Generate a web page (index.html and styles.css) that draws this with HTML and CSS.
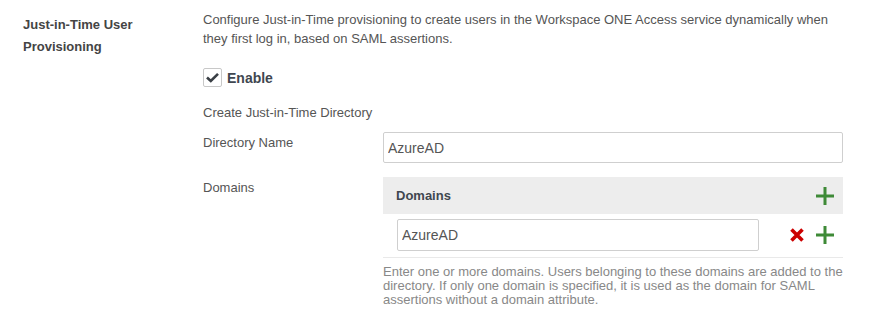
FILE: index.html
```html
<!DOCTYPE html>
<html lang="en">
<head>
  <meta charset="UTF-8">
  <title>Just-in-Time User Provisioning</title>
  <link rel="stylesheet" href="styles.css">
</head>
<body>
  <div class="section">
    <div class="section-title">Just-in-Time User Provisioning</div>

    <div class="section-body">
      <p class="intro">
        Configure Just-in-Time provisioning to create users in the Workspace ONE Access service dynamically when
        they first log in, based on SAML assertions.
      </p>

      <!-- enable checkbox -->
      <label class="enable">
        <span class="checkbox">
          <svg width="13" height="11" viewBox="0 0 13 11"><path d="M1 5.5 L4.8 9 L12 1.8" fill="none" stroke="#3a3f45" stroke-width="2.6"/></svg>
        </span>
        Enable
      </label>

      <div class="subhead">Create Just-in-Time Directory</div>

      <div class="field">
        <div class="field-label">Directory Name</div>
        <div class="field-control">
          <input class="text-input" type="text" value="AzureAD">
        </div>
      </div>

      <div class="field">
        <div class="field-label">Domains</div>
        <div class="field-control">
          <div class="domains-head">
            <span>Domains</span>
            <span class="icon-add">
              <svg width="18" height="18" viewBox="0 0 18 18"><path d="M9 0 V18 M0 9 H18" stroke="#3e8a37" stroke-width="3"/></svg>
            </span>
          </div>
          <div class="domain-row">
            <input class="text-input domain-input" type="text" value="AzureAD">
            <span class="icon-remove">
              <svg width="14" height="14" viewBox="0 0 14 14"><path d="M1.5 1.5 L12.5 12.5 M12.5 1.5 L1.5 12.5" stroke="#cc0000" stroke-width="3.6"/></svg>
            </span>
            <span class="icon-add">
              <svg width="18" height="18" viewBox="0 0 18 18"><path d="M9 0 V18 M0 9 H18" stroke="#3e8a37" stroke-width="3"/></svg>
            </span>
          </div>
          <p class="help">
            Enter one or more domains. Users belonging to these domains are added to the
            directory. If only one domain is specified, it is used as the domain for SAML
            assertions without a domain attribute.
          </p>
        </div>
      </div>
    </div>
  </div>
</body>
</html>
```

FILE: styles.css
```css
/* page */
body {
  margin: 0;
  background-color: #fff;
  font-family: "Liberation Sans", Arial, sans-serif;
  font-size: 13px;
  color: #555;
}
.section {
  display: flex;
  padding: 10px 0 0 23px;
}
/* left title */
.section-title {
  width: 125px;
  margin-right: 55px;
  padding-top: 4px;
  font-weight: bold;
  line-height: 22px;
  color: #444;
}
.section-body {
  width: 640px;
}
.intro {
  margin: 0;
  line-height: 19px;
  color: #555;
}
/* enable checkbox */
.enable {
  display: flex;
  align-items: center;
  margin-top: 20px;
  font-size: 14px;
  font-weight: bold;
  color: #3f4750;
}
.checkbox {
  box-sizing: border-box;
  width: 19px;
  height: 19px;
  margin-right: 5px;
  border: 1px solid #c8c8c8;
  border-radius: 2px;
  display: flex;
  align-items: center;
  justify-content: center;
}
.subhead {
  margin-top: 17px;
  line-height: 18px;
  color: #555;
}
/* label + control rows */
.field {
  display: flex;
  margin-top: 10px;
}
.field + .field {
  margin-top: 14px;
}
.field-label {
  width: 180px;
  padding-top: 2px;
  line-height: 18px;
  color: #555;
}
.field-control {
  width: 460px;
}
.text-input {
  box-sizing: border-box;
  width: 100%;
  height: 31px;
  margin: 0;
  padding: 0 4px;
  border: 1px solid #cfcfcf;
  border-radius: 2px;
  font-family: inherit;
  font-size: 14px;
  color: #555;
}
/* domains list */
.domains-head {
  height: 37px;
  display: flex;
  align-items: center;
  justify-content: space-between;
  padding: 0 9px 0 13px;
  background-color: #ededed;
  font-weight: bold;
  color: #3f4750;
}
.icon-add svg,
.icon-remove svg {
  display: block;
}
.domain-row {
  display: flex;
  align-items: center;
  padding: 5px 9px 6px 14px;
  border-bottom: 1px solid #e9e9e9;
}
.domain-input {
  width: 362px;
  height: 32px;
}
.icon-remove {
  margin-left: 31px;
  margin-right: 12px;
}
.help {
  margin: 7px 0 0;
  line-height: 14px;
  color: #888;
}
```
